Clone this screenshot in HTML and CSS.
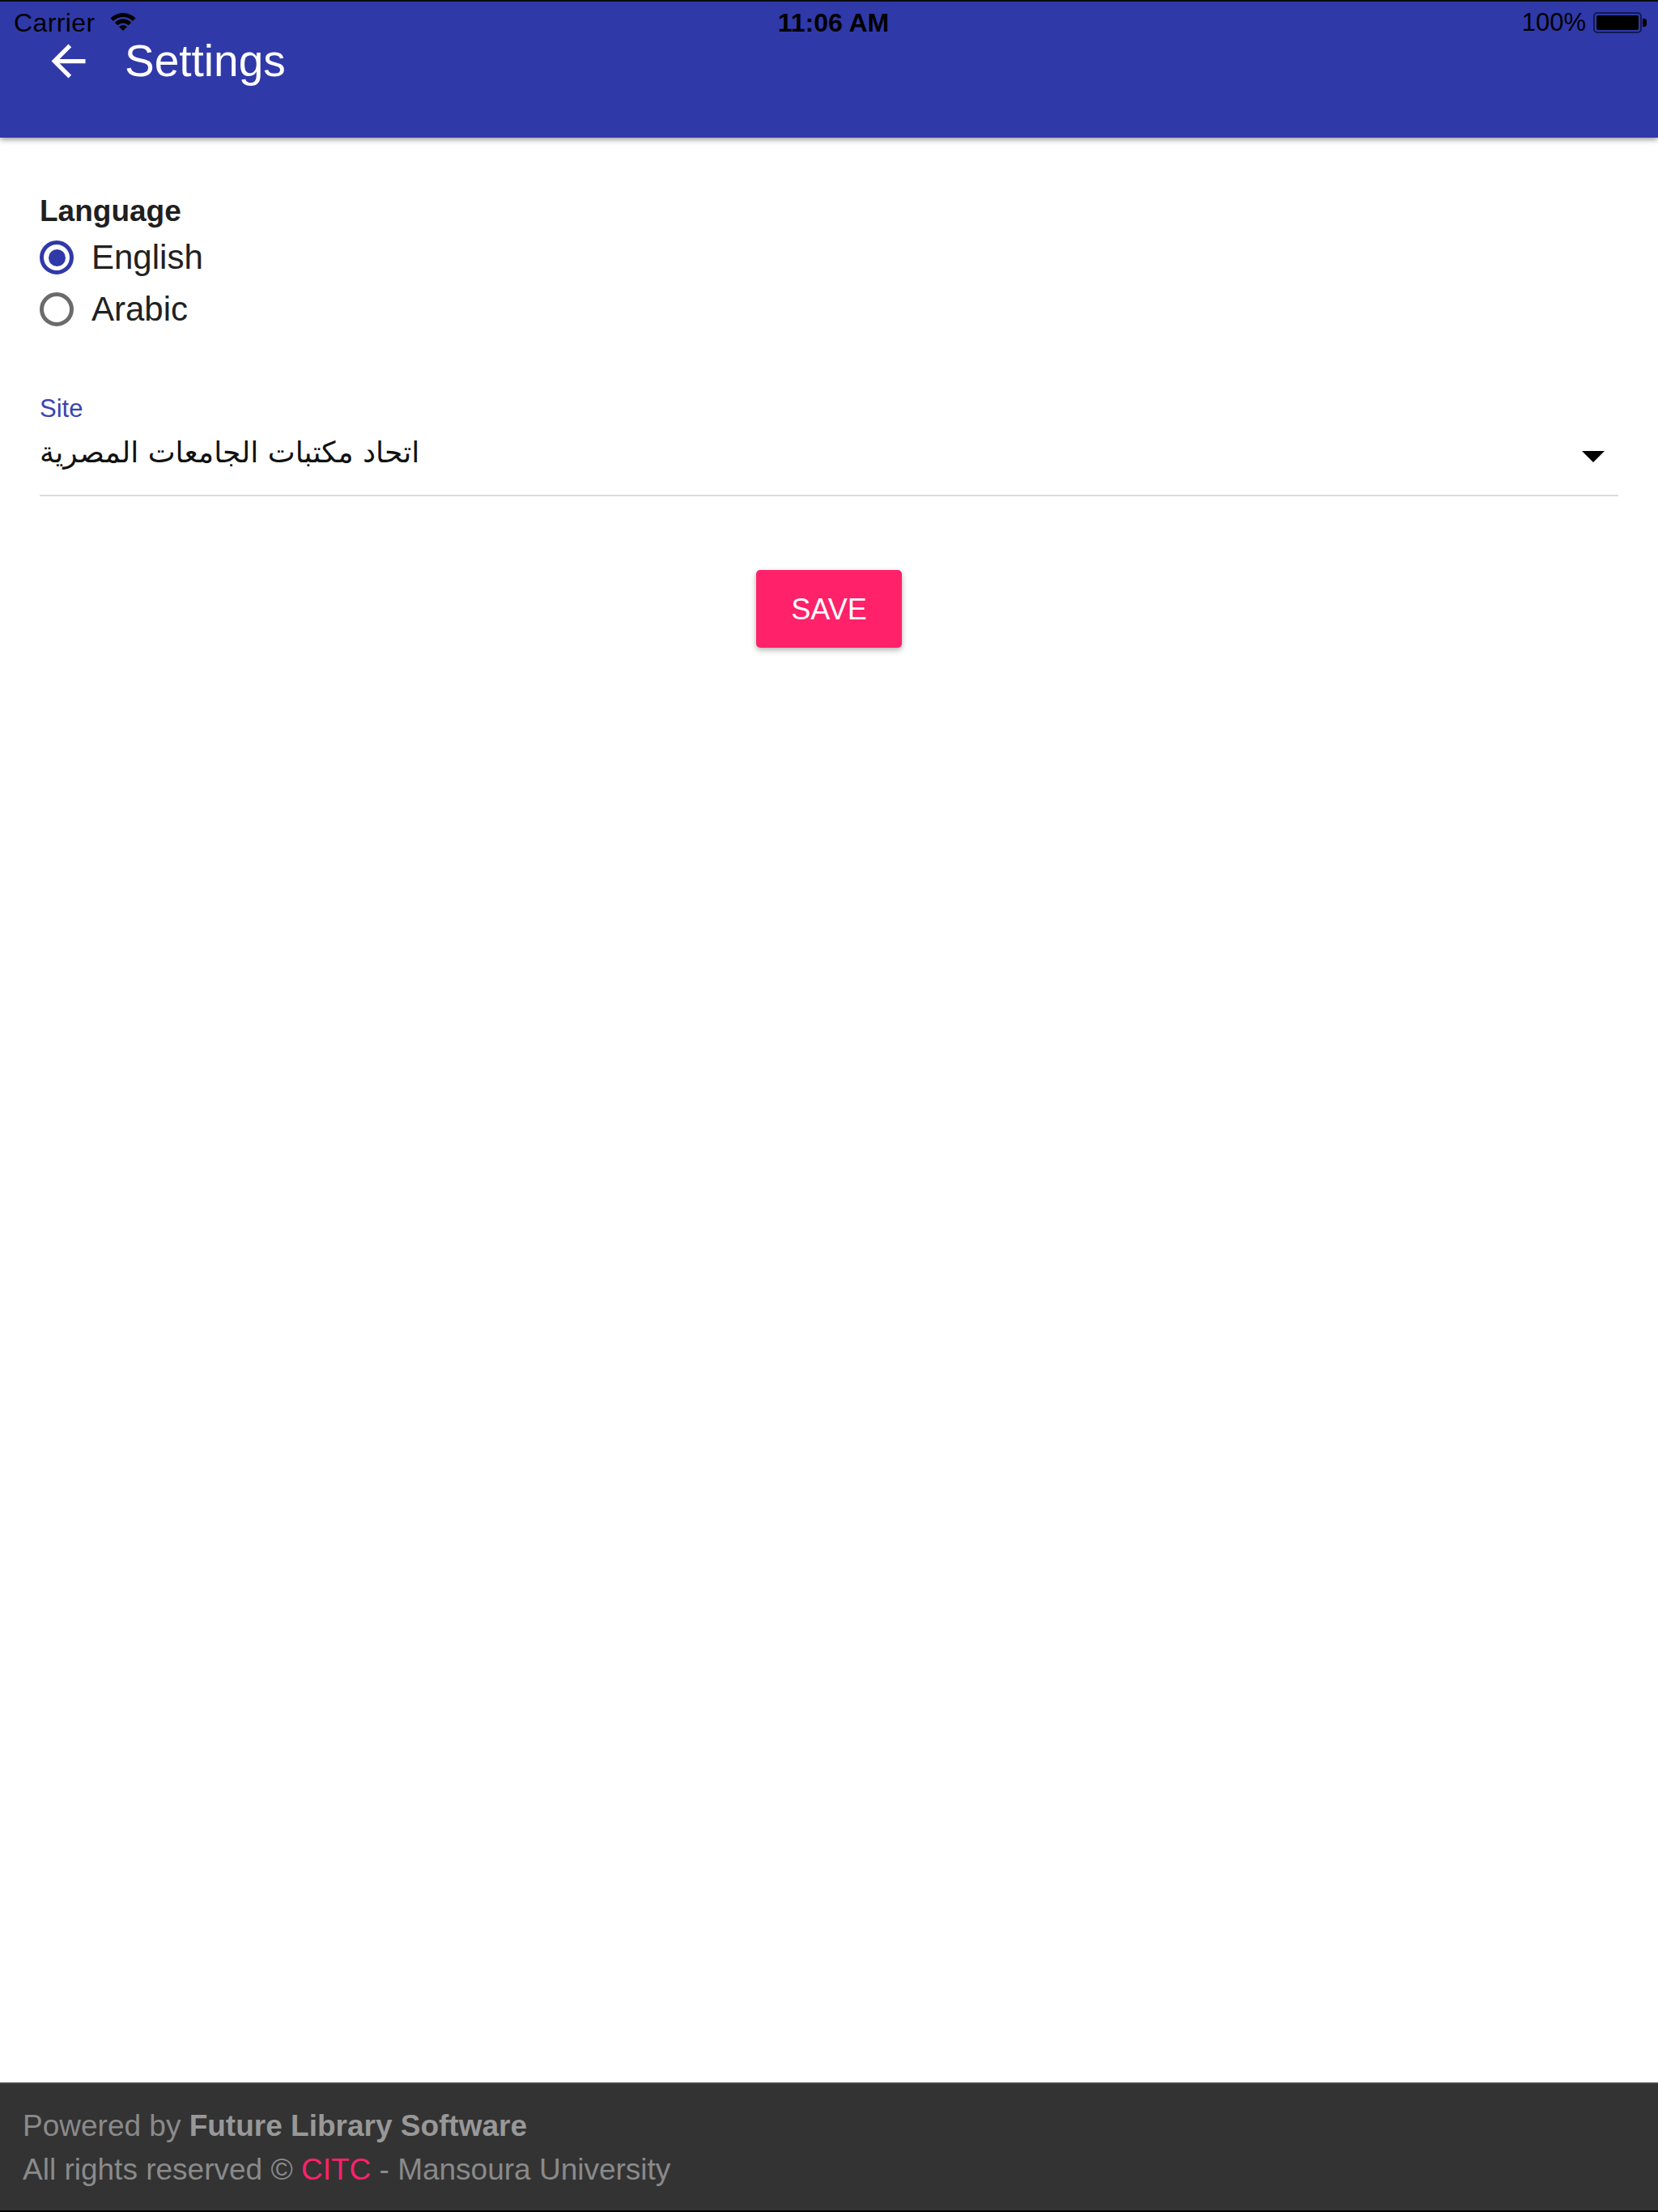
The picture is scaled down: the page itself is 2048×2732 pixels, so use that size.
FILE: index.html
```html
<!DOCTYPE html>
<html lang="en">
<head>
<meta charset="utf-8">
<title>Settings</title>
<link rel="stylesheet" href="styles.css">
</head>
<body>
<div class="screen">
  <header class="appbar">
    <div class="statusbar">
      <div class="sb-left">
        <span class="carrier">Carrier</span>
        <svg class="wifi" viewBox="0 0 32 24" width="32" height="24" aria-hidden="true">
          <path d="M0.44 7.44 A22 22 0 0 1 31.56 7.44 L28.02 10.98 A17 17 0 0 0 3.98 10.98 Z"/>
          <path d="M5.75 12.75 A14.5 14.5 0 0 1 26.25 12.75 L22.72 16.28 A9.5 9.5 0 0 0 9.28 16.28 Z"/>
          <path d="M16 23 L11.05 18.05 A7 7 0 0 1 20.95 18.05 Z"/>
        </svg>
      </div>
      <div class="sb-time">11:06 AM</div>
      <div class="sb-right">
        <span class="pct">100%</span>
        <span class="battery"><span class="battery-fill"></span></span>
        <span class="battery-nub"></span>
      </div>
    </div>
    <div class="toolbar">
      <svg class="back" viewBox="0 0 24 24" width="63" height="63" aria-hidden="true">
        <path d="M20 11H7.83l5.59-5.59L12 4l-8 8 8 8 1.41-1.41L7.83 13H20v-2z"/>
      </svg>
      <h1 class="title">Settings</h1>
    </div>
  </header>

  <main class="content">
    <div class="section-label">Language</div>
    <div class="radio-group">
      <div class="radio-row">
        <span class="radio checked"><span class="radio-dot"></span></span>
        <span class="radio-label">English</span>
      </div>
      <div class="radio-row">
        <span class="radio"></span>
        <span class="radio-label">Arabic</span>
      </div>
    </div>

    <div class="field">
      <div class="field-label">Site</div>
      <div class="field-row">
        <div class="field-value"><span dir="rtl">اتحاد مكتبات الجامعات المصرية</span></div>
        <span class="caret"></span>
      </div>
    </div>

    <div class="actions">
      <button class="save" type="button">SAVE</button>
    </div>
  </main>

  <footer class="footer">
    <div class="footer-line">Powered by <strong>Future Library Software</strong></div>
    <div class="footer-line">All rights reserved © <span class="accent">CITC</span> - Mansoura University</div>
  </footer>
</div>
</body>
</html>
```

FILE: styles.css
```css
* { box-sizing: border-box; }

html, body {
  margin: 0;
  padding: 0;
  background: #ffffff;
}

body {
  font-family: "Liberation Sans", Arial, sans-serif;
  color: #212121;
}

.screen {
  width: 2048px;
  height: 2732px;
  display: flex;
  flex-direction: column;
  overflow: hidden;
}

/* ---------- App bar ---------- */
.appbar {
  height: 170px;
  flex: 0 0 170px;
  background: #3039a8;
  border-top: 2px solid #0c0c0c;
  box-shadow: 0 2px 7px rgba(0, 0, 0, 0.45);
  position: relative;
  z-index: 2;
  display: flex;
  flex-direction: column;
}

.statusbar {
  height: 45px;
  padding: 7px 14px 0 17px;
  display: grid;
  grid-template-columns: 1fr auto 1fr;
  align-items: start;
  font-size: 31px;
  line-height: 38px;
  color: #000;
}

.sb-left {
  display: flex;
  align-items: center;
  gap: 18px;
}

.carrier {
  font-size: 32px;
  letter-spacing: 0.4px;
}

.wifi {
  fill: #000;
  margin-top: -2px;
}

.sb-time {
  font-weight: bold;
  font-size: 32px;
  padding-left: 8px;
}

.sb-right {
  display: flex;
  align-items: center;
  justify-content: flex-end;
}

.pct {
  margin-right: 9px;
}

.battery {
  width: 60px;
  height: 26px;
  border: 2px solid #111a55;
  border-radius: 5px;
  padding: 2px;
  display: flex;
}

.battery-fill {
  flex: 1;
  background: #000;
  border-radius: 2px;
}

.battery-nub {
  width: 5px;
  height: 10px;
  background: #000;
  border-radius: 0 3px 3px 0;
  margin-left: 1px;
}

.toolbar {
  height: 56px;
  display: flex;
  align-items: center;
  padding-left: 53px;
}

.back {
  fill: #ffffff;
  flex: 0 0 auto;
}

.title {
  margin: 0 0 0 38px;
  font-size: 55px;
  font-weight: normal;
  line-height: 56px;
  color: #ffffff;
}

/* ---------- Content ---------- */
.content {
  flex: 1 1 auto;
  padding: 69px 49px 0;
}

.section-label {
  font-size: 37px;
  font-weight: bold;
  line-height: 44px;
  color: #1f1f1f;
}

.radio-group {
  margin-top: 3px;
}

.radio-row {
  height: 64px;
  display: flex;
  align-items: center;
  gap: 22px;
}

.radio {
  width: 42px;
  height: 42px;
  border: 5px solid #6b6b6b;
  border-radius: 50%;
  display: flex;
  align-items: center;
  justify-content: center;
  flex: 0 0 auto;
}

.radio.checked {
  border-color: #3039a8;
}

.radio-dot {
  width: 21px;
  height: 21px;
  border-radius: 50%;
  background: #3039a8;
}

.radio-label {
  font-size: 42px;
  line-height: 64px;
  color: #212121;
}

.field {
  margin-top: 73px;
}

.field-label {
  font-size: 31px;
  line-height: 36px;
  color: #3a44b0;
}

.field-row {
  display: flex;
  align-items: flex-start;
  padding-bottom: 16px;
  border-bottom: 2px solid #dcdcdc;
}

.field-value {
  flex: 1 1 auto;
  font-family: "DejaVu Sans", sans-serif;
  font-size: 36px;
  line-height: 72px;
  color: #111;
}

.caret {
  width: 0;
  height: 0;
  border-left: 14px solid transparent;
  border-right: 14px solid transparent;
  border-top: 14px solid #000;
  margin-top: 34px;
  margin-right: 17px;
}

.actions {
  margin-top: 91px;
  display: flex;
  justify-content: center;
}

.save {
  width: 180px;
  height: 96px;
  border: 0;
  border-radius: 5px;
  background: #ff2169;
  color: #ffffff;
  font-family: "Liberation Sans", Arial, sans-serif;
  font-size: 36px;
  padding: 2px 0 0;
  box-shadow: 0 3px 7px rgba(0, 0, 0, 0.3);
}

/* ---------- Footer ---------- */
.footer {
  flex: 0 0 160px;
  height: 160px;
  background: #333333;
  border-top: 2px solid #474747;
  border-bottom: 2px solid #000;
  padding: 25px 28px 0;
  color: #8a8a8a;
  font-size: 37px;
  line-height: 54px;
}

.footer-line strong {
  font-weight: bold;
  color: #989898;
}

.accent {
  color: #ff2169;
}
```
